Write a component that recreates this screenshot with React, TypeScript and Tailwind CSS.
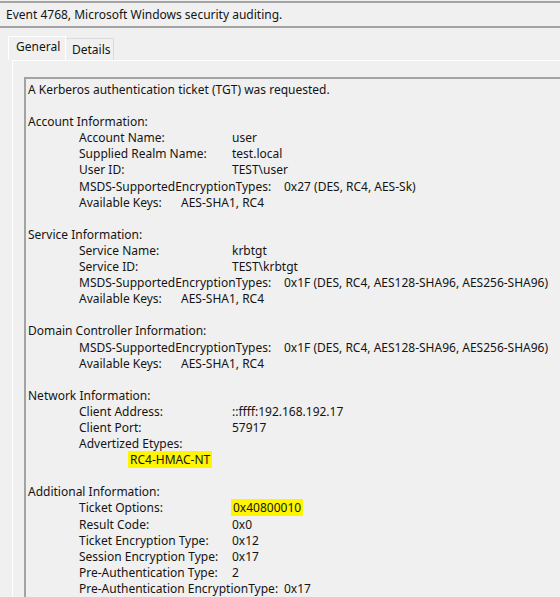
import React from 'react'

type Row =
  | { kind: 'text'; text: string }
  | { kind: 'blank' }
  | { kind: 'field'; label: string; value?: string; wide?: 'short' | 'mid' | 'long'; mark?: boolean }
  | { kind: 'sub'; value: string; mark?: boolean }

const rows: Row[] = [
  { kind: 'text', text: 'A Kerberos authentication ticket (TGT) was requested.' },
  { kind: 'blank' },
  { kind: 'text', text: 'Account Information:' },
  { kind: 'field', label: 'Account Name:', value: 'user' },
  { kind: 'field', label: 'Supplied Realm Name:', value: 'test.local' },
  { kind: 'field', label: 'User ID:', value: 'TEST\\user' },
  { kind: 'field', label: 'MSDS-SupportedEncryptionTypes:', value: '0x27 (DES, RC4, AES-Sk)', wide: 'long' },
  { kind: 'field', label: 'Available Keys:', value: 'AES-SHA1, RC4', wide: 'short' },
  { kind: 'blank' },
  { kind: 'text', text: 'Service Information:' },
  { kind: 'field', label: 'Service Name:', value: 'krbtgt' },
  { kind: 'field', label: 'Service ID:', value: 'TEST\\krbtgt' },
  { kind: 'field', label: 'MSDS-SupportedEncryptionTypes:', value: '0x1F (DES, RC4, AES128-SHA96, AES256-SHA96)', wide: 'long' },
  { kind: 'field', label: 'Available Keys:', value: 'AES-SHA1, RC4', wide: 'short' },
  { kind: 'blank' },
  { kind: 'text', text: 'Domain Controller Information:' },
  { kind: 'field', label: 'MSDS-SupportedEncryptionTypes:', value: '0x1F (DES, RC4, AES128-SHA96, AES256-SHA96)', wide: 'long' },
  { kind: 'field', label: 'Available Keys:', value: 'AES-SHA1, RC4', wide: 'short' },
  { kind: 'blank' },
  { kind: 'text', text: 'Network Information:' },
  { kind: 'field', label: 'Client Address:', value: '::ffff:192.168.192.17' },
  { kind: 'field', label: 'Client Port:', value: '57917' },
  { kind: 'field', label: 'Advertized Etypes:' },
  { kind: 'sub', value: 'RC4-HMAC-NT', mark: true },
  { kind: 'blank' },
  { kind: 'text', text: 'Additional Information:' },
  { kind: 'field', label: 'Ticket Options:', value: '0x40800010', mark: true },
  { kind: 'field', label: 'Result Code:', value: '0x0' },
  { kind: 'field', label: 'Ticket Encryption Type:', value: '0x12' },
  { kind: 'field', label: 'Session Encryption Type:', value: '0x17' },
  { kind: 'field', label: 'Pre-Authentication Type:', value: '2' },
  { kind: 'field', label: 'Pre-Authentication EncryptionType:', value: '0x17', wide: 'long' },
]

const Mark: React.FC<{ children: React.ReactNode }> = ({ children }) => (
  <span className="bg-[#fff500] px-[2px]">{children}</span>
)

const Line: React.FC<{ row: Row }> = ({ row }) => {
  if (row.kind === 'blank') return <div className="h-[16.1px]" />
  if (row.kind === 'text') return <div className="h-[16.1px] whitespace-nowrap">{row.text}</div>
  if (row.kind === 'sub')
    return (
      <div className="h-[16.1px] whitespace-nowrap pl-[100px]">
        {row.mark ? <Mark>{row.value}</Mark> : row.value}
      </div>
    )
  const labelWidth =
    row.wide === 'long' ? 'min-w-[205px]' : row.wide === 'short' ? 'min-w-[102px]' : 'min-w-[153px]'
  return (
    <div className="flex h-[16.1px] whitespace-nowrap pl-[51px]">
      <span className={`${labelWidth} pr-[4px]`}>{row.label}</span>
      {row.value && (
        <span className={row.mark ? '-ml-[1px]' : ''}>{row.mark ? <Mark>{row.value}</Mark> : row.value}</span>
      )}
    </div>
  )
}

export default function App() {
  return (
    <div className="w-[560px] h-[597px] overflow-hidden bg-[#f0f0f0] pt-[1px] font-['Noto_Sans',sans-serif] text-[#141414]">
      {/* Title bar */}
      <div className="h-[27px] border-y-2 border-[#a3a3a3] pl-[6px] text-[12px] leading-[23px] whitespace-nowrap">
        Event 4768, Microsoft Windows security auditing.
      </div>

      {/* Tabs */}
      <div className="flex items-end pl-[8px] pt-[8px] text-[12px]">
        <div className="h-[24px] w-[58px] border-t border-l border-r border-white pl-[7px] leading-[20px]">
          General
        </div>
        <div className="h-[22px] w-[48px] border-t border-r border-[#dcdcdc] pl-[6px] leading-[21px]">
          Details
        </div>
      </div>

      {/* Panel */}
      <div className="ml-[12px] border-t border-l border-white pl-[11px] pt-[16px]">
        <div className="border-t-2 border-l-2 border-[#a3a3a3] pl-[2px] pt-[3px] text-[12px] leading-[16.1px]">
          {rows.map((row, i) => (
            <Line key={i} row={row} />
          ))}
        </div>
      </div>
    </div>
  )
}
